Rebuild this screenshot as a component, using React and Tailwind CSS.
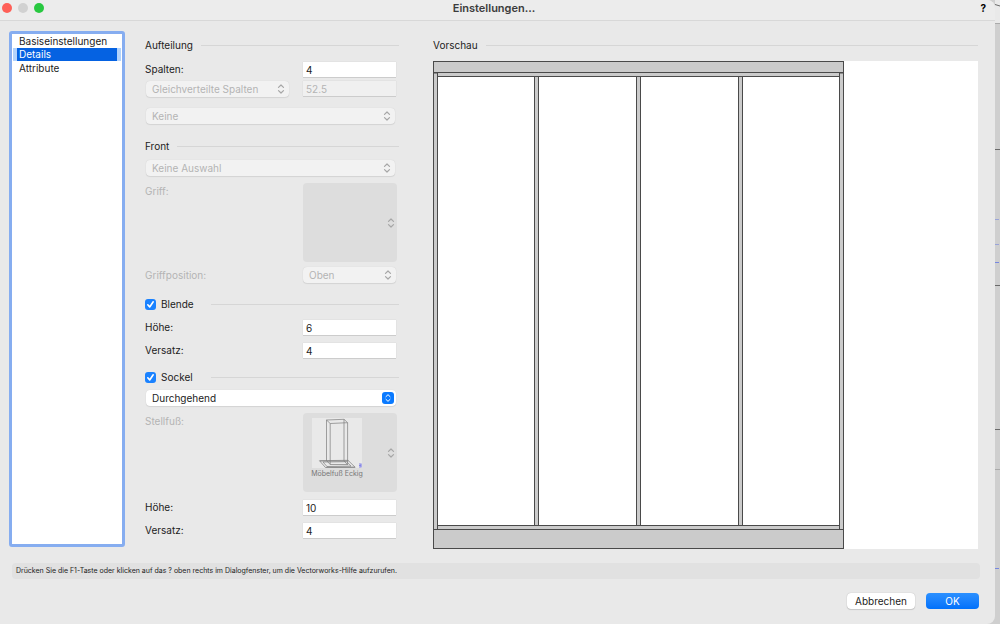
import React, { useState } from "react";

function UpDown({ className }) {
  return (
    <svg
      viewBox="0 0 8 12"
      className={className}
      fill="none"
      stroke="currentColor"
      strokeWidth="1.2"
      strokeLinecap="round"
      strokeLinejoin="round"
      aria-hidden="true"
    >
      <path d="M1.5 4.4 4 2l2.500 2.400M1.500 7.600 4 10l2.500-2.400" />
    </svg>
  );
}

function Select({ label, options, disabled, className = "" }) {
  return (
    <div className={`relative h-4 ${className}`}>
      <select
        aria-label={label}
        disabled={disabled}
        className="block h-4 w-full appearance-none rounded bg-white pr-5 pl-1.5 text-[10px] leading-4 text-[#222] shadow-[0_0_1px_rgba(0,0,0,0.15),0_1px_1px_rgba(0,0,0,0.08)] outline-none disabled:bg-[#f2f2f2] disabled:text-[#b4b4b4] disabled:opacity-100"
      >
        {options.map((o) => (
          <option key={o}>{o}</option>
        ))}
      </select>
      {disabled ? (
        <UpDown className="pointer-events-none absolute top-0.5 right-1 h-3 w-2 text-[#a6a6a6]" />
      ) : (
        <span className="pointer-events-none absolute top-0.5 right-0.5 flex h-3 w-3 items-center justify-center rounded-[3px] bg-[#0a7aff] text-white">
          <UpDown className="h-2.5 w-2" />
        </span>
      )}
    </div>
  );
}

function TextInput({ id, label, value, disabled }) {
  return (
    <input
      id={id}
      aria-label={label}
      defaultValue={value}
      disabled={disabled}
      type="text"
      className="block h-[15px] w-[93px] shrink-0 bg-white px-[3px] pt-px text-[10px] leading-[14px] text-[#222] shadow-[0_0_1px_rgba(0,0,0,0.15),0_1px_0_rgba(0,0,0,0.1)] outline-none disabled:bg-[#f0f0f0] disabled:text-[#b4b4b4]"
    />
  );
}

function Field({ id, label, value, className = "" }) {
  return (
    <div className={`flex h-4 items-center justify-between pr-[3px] ${className}`}>
      <label htmlFor={id}>{label}</label>
      <TextInput id={id} value={value} />
    </div>
  );
}

function Heading({ children, className = "" }) {
  return (
    <div className={`flex h-3.5 items-center gap-2 ${className}`}>
      <h2>{children}</h2>
      <span className="h-px flex-1 bg-[#d6d6d6]" />
    </div>
  );
}

function CheckHeading({ label, className = "" }) {
  return (
    <div className={`flex h-3.5 items-center ${className}`}>
      <label className="flex w-[66px] items-center gap-[5px]">
        <span className="grid h-[11px] w-[11px] shrink-0">
          <input
            type="checkbox"
            defaultChecked
            className="peer col-start-1 row-start-1 m-0 h-[11px] w-[11px] appearance-none rounded-[3px] bg-white checked:bg-[#1a82ff]"
          />
          <svg
            viewBox="0 0 11 11"
            className="pointer-events-none col-start-1 row-start-1 hidden h-[11px] w-[11px] peer-checked:block"
            fill="none"
            stroke="white"
            strokeWidth="1.6"
            strokeLinecap="round"
            strokeLinejoin="round"
            aria-hidden="true"
          >
            <path d="M2.8 5.8 4.7 8 8.2 2.8" />
          </svg>
        </span>
        {label}
      </label>
      <span className="h-px flex-1 bg-[#d6d6d6]" />
    </div>
  );
}

function SymbolPicker({ label, children }) {
  return (
    <button
      type="button"
      disabled
      aria-label={label}
      className="flex h-[79px] w-[94px] items-center justify-between rounded bg-[#dddddd] pr-0.5 pl-1.5"
    >
      <span className="flex w-[56px] flex-col items-center pb-2">{children}</span>
      <UpDown className="h-3 w-2 text-[#a6a6a6]" />
    </button>
  );
}

function FootDrawing() {
  return (
    <svg viewBox="0 0 50 50" className="h-[50px] w-[50px] bg-[#e9e9e9]" fill="none" stroke="#7c7c7c" strokeWidth="0.7" aria-hidden="true">
      <path d="M14.5 2 32 1.300l3.600 3.400-17.400.8zM14.500 2v40.500M32 1.300v41.500M18.200 5.500v41M35.600 4.700v42M14.500 42.500l3.700 4M32 42.800l3.600 4M18.200 46.500h17.400" />
      <path d="M7.500 42.700 36 42.300l7.200 7-29.700.3zM11 44l4 4.500 24-.4-4.500-4.400z" />
      <path d="M7.800 43h28.500M13.800 49.200h29" />
      <path d="M47 46h2v3h-2M47 47.500h2" stroke="#8585e8" strokeWidth="1.200" />
    </svg>
  );
}

function Sidebar() {
  const [active, setActive] = useState("Details");
  return (
    <nav className="mb-0.5 flex w-[116px] shrink-0 flex-col rounded-[3px] border-[3px] border-[#86adf0] bg-white">
      {["Basiseinstellungen", "Details", "Attribute"].map((item) => (
        <button
          key={item}
          type="button"
          onClick={() => setActive(item)}
          className={
            item === active
              ? "mx-px h-[13px] border-x-4 border-[#b3d3fb] bg-[#0562e2] pl-0.5 text-left leading-[13px] text-white"
              : "mx-px h-[14px] border-x-4 border-transparent pl-0.5 text-left leading-[14px] text-[#222]"
          }
        >
          {item}
        </button>
      ))}
    </nav>
  );
}

function Preview() {
  return (
    <svg
      viewBox="0 0 545 488"
      preserveAspectRatio="xMinYMin meet"
      className="mt-[9px] h-[488px] w-full bg-white"
      fill="#cbcbcb"
      stroke="#4a4a4a"
      strokeWidth="1"
      role="img"
      aria-label="Vorschau"
    >
      <rect x="0.5" y="12" width="4" height="456.5" />
      <rect x="406.5" y="12" width="4" height="456.5" />
      <rect x="4.5" y="11.5" width="402" height="4" />
      <rect x="4.5" y="464.500" width="402" height="4" />
      <rect x="101.5" y="15.5" width="4" height="449" />
      <rect x="203.5" y="15.5" width="4" height="449" />
      <rect x="305.5" y="15.5" width="4" height="449" />
      <rect x="0.5" y="0.5" width="410" height="11" />
      <rect x="0.5" y="468.5" width="410" height="19" />
    </svg>
  );
}

function Backdrop() {
  return (
    <div className="w-[5px] shrink-0 bg-[#cfcfcf]">
      <svg viewBox="0 0 5 624" className="h-[624px] w-[5px]" fill="none" aria-hidden="true">
        <path d="M0 0h5v23H0z" fill="#e9e9e9" />
        <path d="M0 4.5l5 1.5M0 149.5h5M0 285.5h5M0 429.5h5" stroke="#6a6a6a" />
        <path d="M0 23.5h5M0 469.5h5" stroke="#aaaaaa" />
        <path d="M0 219.5h4M0 244.5h4" stroke="#9aa4d8" />
        <path d="M0 262.5h4M0 568.5h4" stroke="#7888e0" />
      </svg>
    </div>
  );
}

export default function App() {
  return (
    <div className="flex min-h-screen bg-[#cfcfcf] font-['Inter','Liberation_Sans',sans-serif] text-[10px] leading-[14px] text-[#1c1c1c]">
      <main className="flex min-w-0 flex-1 flex-col rounded-r-lg bg-[#e9e9e9]">
        <header className="flex h-[21px] items-center justify-between rounded-tr-lg border-b border-[#d8d8d8] bg-[#ececec] pr-[9px] pb-1 pl-0.5">
          <div className="flex flex-1 gap-1.5">
            <button type="button" aria-label="Schließen" className="h-2.5 w-2.5 rounded-full bg-[#fe5f57]" />
            <button type="button" aria-label="Minimieren" className="h-2.5 w-2.5 rounded-full bg-[#d1d1d1]" />
            <button type="button" aria-label="Zoomen" className="h-2.5 w-2.5 rounded-full bg-[#28c840]" />
          </div>
          <h1 className="text-[11px] font-semibold text-[#3c3c3c]">Einstellungen...</h1>
          <div className="flex flex-1 justify-end">
            <button type="button" aria-label="Hilfe" className="font-bold text-black">?</button>
          </div>
        </header>

        <div className="flex pt-2.5 pr-[17px] pl-[9px]">
          <Sidebar />

          <form className="ml-5 w-[254px] shrink-0 pt-[7px]">
            <Heading>Aufteilung</Heading>
            <Field id="spalten" label="Spalten:" value="4" className="mt-[9px]" />
            <div className="mt-1 flex justify-between pr-[3px] pl-px">
              <Select label="Spaltenverteilung" options={["Gleichverteilte Spalten"]} disabled className="w-[143px]" />
              <TextInput label="Spaltenbreite" value="52.5" disabled />
            </div>
            <Select label="Einteilung" options={["Keine"]} disabled className="mt-[11px] mr-1 ml-px" />

            <Heading className="mt-[15px]">Front</Heading>
            <Select label="Front" options={["Keine Auswahl"]} disabled className="mt-[7px] mr-1 ml-px" />
            <div className="mt-[7px] flex justify-between pr-0.5 text-[#b4b4b4]">
              <span className="pt-px">Griff:</span>
              <SymbolPicker label="Griff" />
            </div>
            <div className="mt-[5px] flex items-center justify-between pr-[3px] text-[#b4b4b4]">
              <span>Griffposition:</span>
              <Select label="Griffposition" options={["Oben"]} disabled className="w-[93px]" />
            </div>

            <CheckHeading label="Blende" className="mt-3.5" />
            <Field id="blende-hoehe" label="Höhe:" value="6" className="mt-2" />
            <Field id="blende-versatz" label="Versatz:" value="4" className="mt-[7px]" />

            <CheckHeading label="Sockel" className="mt-3" />
            <Select label="Sockel" options={["Durchgehend"]} className="mt-1.5 mr-[3px] ml-px" />
            <div className="mt-[7px] flex justify-between pr-0.5 text-[#b4b4b4]">
              <span className="pt-px">Stellfuß:</span>
              <SymbolPicker label="Stellfuß">
                <FootDrawing />
                <span className="text-[7px] leading-[12px] whitespace-nowrap text-[#777]">Möbelfuß Eckig</span>
              </SymbolPicker>
            </div>
            <Field id="sockel-hoehe" label="Höhe:" value="10" className="mt-[7px]" />
            <Field id="sockel-versatz" label="Versatz:" value="4" className="mt-[7px]" />
          </form>

          <section className="ml-[34px] min-w-0 flex-1 pt-[7px]">
            <Heading>Vorschau</Heading>
            <Preview />
          </section>
        </div>

        <p className="mt-3.5 mr-[15px] ml-3 rounded bg-[#e1e1e1] px-1 text-[7px] leading-[16px]">
          Drücken Sie die F1-Taste oder klicken auf das ? oben rechts im Dialogfenster, um die Vectorworks-Hilfe aufzurufen.
        </p>
        <footer className="mt-3.5 mr-4 flex justify-end gap-[11px]">
          <button type="button" className="h-4 w-[68px] rounded bg-white leading-4 shadow-[0_0_1px_rgba(0,0,0,0.3),0_1px_1px_rgba(0,0,0,0.12)]">
            Abbrechen
          </button>
          <button type="submit" className="h-4 w-[53px] rounded bg-linear-to-b from-[#2b90ff] to-[#0071fb] leading-4 text-white">
            OK
          </button>
        </footer>
      </main>
      <Backdrop />
    </div>
  );
}
